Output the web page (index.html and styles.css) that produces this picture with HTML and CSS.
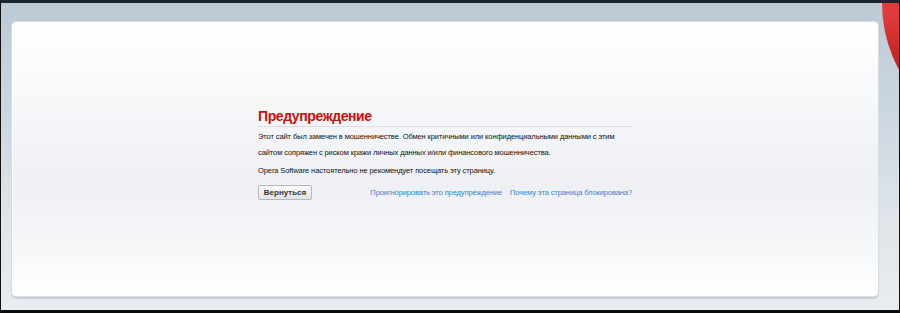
FILE: index.html
```html
<!DOCTYPE html>
<html lang="ru">
<head>
    <meta charset="UTF-8">
    <meta name="viewport" content="width=device-width, initial-scale=1.0">
    <title>Предупреждение</title>
    <link rel="stylesheet" href="styles.css">
</head>
<body>
    <div class="frame">
        <!-- piece of the Opera logo peeking in at the top right -->
        <div class="logo-edge"></div>

        <div class="card">
            <div class="warning">
                <h1>Предупреждение</h1>
                <p>Этот сайт был замечен в мошенничестве. Обмен критичными или конфиденциальными данными с этим сайтом сопряжен с риском кражи личных данных и/или финансового мошенничества.</p>
                <p>Opera Software настоятельно не рекомендует посещать эту страницу.</p>
                <div class="actions">
                    <button>Вернуться</button>
                    <div class="links">
                        <a href="#">Проигнорировать это предупреждение</a>
                        <a href="#">Почему эта страница блокирована?</a>
                    </div>
                </div>
            </div>
        </div>
    </div>
</body>
</html>
```
FILE: styles.css
```css
html, body {
    margin: 0;
    padding: 0;
    height: 100%;
}

body {
    font-family: 'Liberation Sans', Arial, sans-serif;
    background: #000;
}

.frame {
    position: relative;
    box-sizing: border-box;
    height: 313px;
    border-top: 3px solid #1d2531;
    border-left: 1px solid #111;
    border-right: 1px solid #111;
    border-bottom: 3px solid #0a0a0a;
    background: linear-gradient(to bottom, #bccad6 0%, #c9d4de 30%, #dfe5ea 70%, #e9ecf0 100%);
    padding: 18px 20px 13px 10px;
    overflow: hidden;
}

.logo-edge {
    position: absolute;
    top: -140px;
    left: 881px;
    width: 280px;
    height: 280px;
    border-radius: 50%;
    background: linear-gradient(to bottom, #e03a3a 55%, #c42424 70%, #96161a 100%);
}

.card {
    height: 100%;
    box-sizing: border-box;
    border: 1px solid #d5dde3;
    border-radius: 5px;
    background: linear-gradient(to bottom, #ffffff 0%, #f6f7f9 30%, #eef0f3 60%, #f4f6f8 80%, #ffffff 100%);
    box-shadow: 0 2px 1px #c6d0d6, inset 1px 1px 0 #ffffff;
    display: flex;
    justify-content: center;
    padding-top: 86px;
}

.warning {
    width: 374px;
}

.warning h1 {
    margin: 0 0 2px;
    padding-bottom: 2px;
    font-size: 14px;
    letter-spacing: -0.4px;
    font-weight: bold;
    color: #cc0d0d;
    border-bottom: 1px solid #dcdfe3;
    line-height: 16px;
}

.warning p {
    margin: 0 0 2px;
    font-size: 7.5px;
    letter-spacing: -0.1px;
    line-height: 16px;
    color: #111;
}

.actions {
    display: flex;
    justify-content: space-between;
    align-items: center;
    margin-top: 6px;
}

button {
    font-family: 'Liberation Sans', Arial, sans-serif;
    font-size: 8px;
    font-weight: bold;
    color: #333;
    width: 54px;
    height: 15px;
    padding: 0;
    line-height: 11px;
    border: 1px solid #b3b8be;
    border-radius: 2px;
    background: linear-gradient(to bottom, #fafafa, #e2e4e7);
}

.links {
    display: flex;
    gap: 8px;
}

.links a {
    font-size: 7.5px;
    letter-spacing: -0.1px;
    color: #3287d3;
    text-decoration: none;
}
```
